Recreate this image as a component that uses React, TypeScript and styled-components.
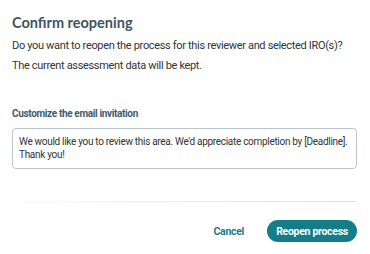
import styled, { createGlobalStyle } from "styled-components";

const GlobalStyle = createGlobalStyle`
  html, body {
    margin: 0;
    padding: 0;
    background: #ffffff;
  }
  body {
    font-family: Roboto, "Liberation Sans", sans-serif;
  }
`;

const Dialog = styled.div`
  width: 370px;
  height: 254px;
  box-sizing: border-box;
  padding: 14px 13px 0 12px;
  display: flex;
  flex-direction: column;
  background: #fff;
`;

const Title = styled.h2`
  margin: 0;
  font-family: Lato, "Open Sans", sans-serif;
  font-size: 14.5px;
  font-weight: 700;
  color: #3e5563;
  line-height: 18px;
`;

const Text = styled.p`
  margin: 0;
  font-size: 11px;
  letter-spacing: -0.33px;
  color: #2f3437;
  line-height: 14px;
`;

const Body = styled.div`
  display: flex;
  flex-direction: column;
  gap: 6px;
  margin-top: 7px;
`;

const Label = styled.label`
  margin-top: 34px;
  font-size: 10px;
  font-weight: 700;
  letter-spacing: -0.35px;
  color: #3f5a6e;
  line-height: 13px;
`;

const Message = styled.div`
  margin-top: 8px;
  height: 41px;
  box-sizing: border-box;
  border: 1px solid #b9c6cf;
  border-radius: 4px;
  padding: 6px 5px 5px 6px;
  font-size: 10px;
  letter-spacing: -0.3px;
  line-height: 13px;
  color: #2f3437;
`;

const Divider = styled.div`
  margin-top: 32px;
  height: 1px;
  background: linear-gradient(to right, rgba(0,0,0,0) 0%, #ececec 50%, #e0e0e0 100%);
  box-shadow: 0 1px 2px rgba(0,0,0,0.04);
`;

const Footer = styled.div`
  display: flex;
  justify-content: flex-end;
  align-items: center;
  gap: 23px;
  margin-top: 18px;
`;

const Cancel = styled.button`
  border: none;
  background: none;
  padding: 0;
  font-family: inherit;
  font-size: 10.5px;
  font-weight: 700;
  letter-spacing: -0.3px;
  color: #1d7c87;
  cursor: pointer;
`;

const Primary = styled.button`
  border: none;
  background: #137e88;
  color: #fff;
  font-family: inherit;
  font-size: 10.5px;
  font-weight: 700;
  letter-spacing: -0.3px;
  width: 90px;
  height: 22px;
  padding: 0;
  border-radius: 11px;
  cursor: pointer;
`;

export default function App() {
  return (
    <>
      <GlobalStyle />
      <Dialog>
        <Title>Confirm reopening</Title>
        <Body>
          <Text>Do you want to reopen the process for this reviewer and selected IRO(s)?</Text>
          <Text>The current assessment data will be kept.</Text>
        </Body>
        <Label>Customize the email invitation</Label>
        <Message>
          We would like you to review this area. We'd appreciate completion by [Deadline]. Thank you!
        </Message>
        <Divider />
        <Footer>
          <Cancel>Cancel</Cancel>
          <Primary>Reopen process</Primary>
        </Footer>
      </Dialog>
    </>
  );
}
